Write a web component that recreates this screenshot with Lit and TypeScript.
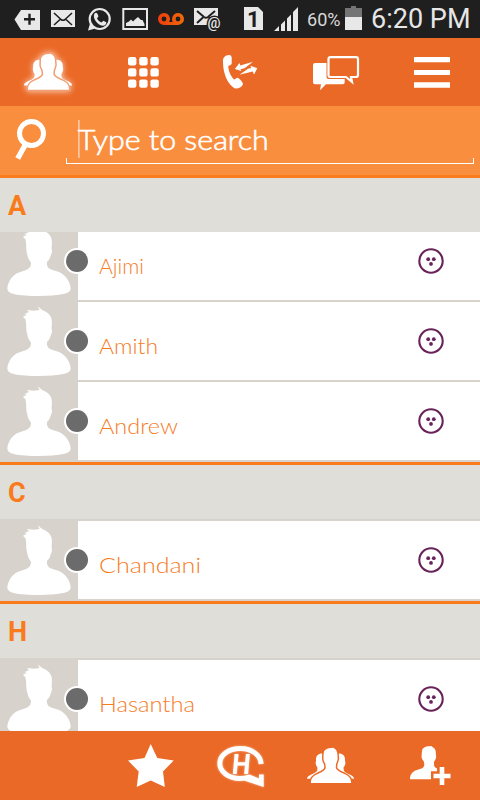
import { LitElement, html, svg, css, SVGTemplateResult } from "lit";
import { customElement, property } from "lit/decorators.js";

interface Contact {
  name: string;
  width: number;
}

const SECTIONS: { letter: string; contacts: Contact[] }[] = [
  {
    letter: "A",
    contacts: [
      { name: "Ajimi", width: 45 },
      { name: "Amith", width: 59 },
      { name: "Andrew", width: 79 },
    ],
  },
  { letter: "C", contacts: [{ name: "Chandani", width: 102 }] },
  { letter: "H", contacts: [{ name: "Hasantha", width: 96 }] },
];

const icon = (box: string, content: SVGTemplateResult) => {
  const [, , w, h] = box.split(" ");
  return html`<svg viewBox=${box} width=${w} height=${h}>${content}</svg>`;
};

const people = (gap: string) => svg`
  <path fill="#fff" d="M15.5 6.7C11 6.7 9 9.500 9.200 13.500L8.800 16.500C9.300 18.500 9.800 20 10.700 21L10.500 24C9.500 26 7 27 4 28.300C1 29.600 0 31 0 32.500H14L24 20ZM32.500 6.700C37 6.700 39 9.500 38.800 13.500L39.200 16.500C38.700 18.500 38.200 20 37.300 21L37.500 24C38.500 26 41 27 44 28.300C47 29.600 48 31 48 32.500H34L24 20Z"/>
  <path fill="#fff" stroke=${gap} stroke-width="3" paint-order="stroke"
    d="M26.700 .7C29 1.700 31.200 4 31 8L31.300 12C31 14 30.300 15.500 29.700 17L29.300 21C30 24 33.500 25.600 37.500 27.200C42.500 29.200 45 31.500 45 36.700H4C4 31.500 6.500 29.200 11.500 27.200C15.500 25.600 18.700 24 19.200 21L18.700 17C17.700 15.500 17 14 16.800 12L17 7C17 3 20 1 26.700 .7Z"/>`;

@customElement("status-bar")
class StatusBar extends LitElement {
  static styles = css`
    :host { display: flex; height: 38px; background: #1f1f1f; }
    svg { display: block; flex: none; }
    text { font-family: Roboto, sans-serif; }
  `;
  render() {
    return html`
      ${icon("0 0 46 38", svg`<path fill="#e8e8e8" d="M14.500 19.500 21 10H40V30H21Z"/><path stroke="#1f1f1f" stroke-width="2.400" d="M24 19.300H35M29.500 13.800V24.800"/>`)}
      ${icon("46 0 36 38", svg`<path fill="#e8e8e8" d="M51 10H75V27H51Z"/><path fill="none" stroke="#1f1f1f" stroke-width="1.600" d="M54 13 61 19.500Q63 21 65 19.500L72 13M54 25 60 19.500M72 25 66 19.500"/>`)}
      ${icon("82 0 34 38", svg`<circle cx="99.700" cy="19" r="10" fill="none" stroke="#e8e8e8" stroke-width="2.200"/><path fill="#e8e8e8" d="M88 30.500 90 23.500 94.500 28.700Z"/><path fill="#e8e8e8" d="M94.500 13.500C95.500 12.500 97 12.600 97.500 14L98.500 16.300 97 18.500C98 20.500 99.500 21.800 101.500 22.500L103.300 20.700 106.300 22.200C106.500 24.500 104.500 26 102.500 25.700C97.500 25 92 18 94.500 13.500Z"/>`)}
      ${icon("116 0 38 38", svg`<path fill="none" stroke="#e8e8e8" stroke-width="2" d="M123.300 9H147V29H123.300Z"/><path fill="#e8e8e8" d="M126 26V23L129 21.500 131 19.500 133 21.500 135 19.500 138 17 141 20 142.500 20 144.500 24V26Z"/>`)}
      ${icon("154 0 34 38", svg`<defs><linearGradient id="vm"><stop stop-color="#f03c0c"/><stop offset="1" stop-color="#f06a0a"/></linearGradient></defs><path fill="url(#vm)" fill-rule="evenodd" d="M164 13a6 6 0 0 0 0 12H178a6 6 0 1 0-5.200-3H169.200A6 6 0 0 0 164 13ZM164 16.600a2.400 2.400 0 1 1 0 4.800a2.400 2.400 0 0 1 0-4.800ZM178 16.600a2.400 2.400 0 1 1 0 4.800a2.400 2.400 0 0 1 0-4.800Z"/>`)}
      ${icon("188 0 50 38", svg`<path fill="#e8e8e8" d="M194 8H218V25H194Z"/><path fill="none" stroke="#1f1f1f" stroke-width="2" d="M197 11 204 17Q206 18.500 208 17L215 11M197 23 203 17.500M213 21 209 17.500"/><text x="207.500" y="27.500" font-size="14" font-weight="500" fill="#e8e8e8" stroke="#1f1f1f" stroke-width="3" paint-order="stroke" textLength="13" lengthAdjust="spacingAndGlyphs">@</text>`)}
      ${icon("238 0 30 38", svg`<path fill="#e8e8e8" d="M244 7H258L263 12V30H244Z"/><text x="247" y="27" font-size="22" font-weight="700" fill="#1f1f1f">1</text>`)}
      ${icon("268 0 36 38", svg`<path fill="#e8e8e8" d="M274 31 279 26V31ZM281 24.500 285 20.500V31H281ZM287 18.500 291 14.500V31H287ZM293 12 298 7V31H293Z"/>`)}
      ${icon("304 0 39 38", svg`<text x="307" y="26" font-size="17.500" fill="#d8d8d8" textLength="33.500" lengthAdjust="spacingAndGlyphs">60%</text>`)}
      ${icon("343 0 23 38", svg`<path fill="#757575" d="M345 8H351V6H356V8H362V17H345Z"/><path fill="#e8e8e8" d="M345 17H362V30H345Z"/>`)}
      ${icon("366 0 114 38", svg`<text x="371" y="28" font-size="27.500" fill="#e6e6e6" textLength="99.500" lengthAdjust="spacingAndGlyphs">6:20 PM</text>`)}
    `;
  }
}

@customElement("tab-bar")
class TabBar extends LitElement {
  static styles = css`
    :host { display: grid; grid-template-columns: repeat(5, 96px); height: 68px; background: #eb6926; }
    svg { display: block; }
    .glow { filter: drop-shadow(0 0 3px rgba(255, 255, 255, 0.75)); }
  `;
  render() {
    const dots = [0, 1, 2].flatMap((r) =>
      [0, 1, 2].map((c) => svg`<rect x=${128 + c * 11.2} y=${57 + r * 11.2} width="8.400" height="8.400" rx="2.200"/>`)
    );
    return html`
      ${icon("0 38 96 68", svg`<g class="glow"><g transform="translate(24 53)">${people("#f29e72")}</g></g>`)}
      ${icon("96 38 96 68", svg`<g fill="#fff">${dots}</g>`)}
      ${icon("192 38 96 68", svg`<g fill="#fff"><path d="M223 62C222.500 58 225 55 229 55C231 55 231.500 56 231.700 58V63.500C231.500 65 229 65.500 228.300 66C228.300 71 231 76.500 234 79.500C235.500 79.500 236.500 77.500 238 77.800C240 79 242.500 82 243 84C242 87.500 238 89 234.500 88.300C228 84.500 223 74 223 62Z"/><path d="M234.800 69 239.500 63 240.300 65.600 253 61.800 244.500 68.300 240.600 69.200 241.300 71Z"/><path d="M239.500 74.800 248 68.800 251.300 68 250.300 65.800 257.300 68.200 254 74.400 252.700 71.600Z"/></g>`)}
      ${icon("288 38 96 68", svg`<path fill="#fff" d="M315 63H326.500V77Q326.500 79 328.500 79H344.700V82.300Q344.700 84.300 342.700 84.300H326L320 90.300 321 84.300H315Q313 84.300 313 82.300V65Q313 63 315 63Z"/><path fill="#eb6926" stroke="#fff" stroke-width="2.200" d="M330.500 57.200H356Q358 57.200 358 59.200V75Q358 77 356 77H351L352 82 346 77H330.500Q328.500 77 328.500 75V59.200Q328.500 57.200 330.500 57.200Z"/>`)}
      ${icon("384 38 96 68", svg`<path fill="#fff" d="M414 57H450V62.300H414ZM414 70H450V75H414ZM414 82.300H450V87.700H414Z"/>`)}
    `;
  }
}

@customElement("search-field")
class SearchField extends LitElement {
  static styles = css`
    :host { display: flex; box-sizing: border-box; height: 72px; background: #f98e3e; border-bottom: 3px solid #f97b1c; }
    svg { display: block; }
    .field { box-sizing: border-box; width: 408px; height: 6px; margin-top: 52px; border: solid #fff; border-width: 0 1px 1px; }
    .entry { display: flex; margin-top: -40px; }
    text { font-family: Lato, sans-serif; font-weight: 300; }
  `;
  render() {
    return html`
      ${icon("0 106 66 69", svg`<g fill="none" stroke="#fff"><circle cx="31.500" cy="133.500" r="12" stroke-width="5"/><path stroke-width="5.400" d="M26 143.500 17.700 158.500"/></g>`)}
      <div class="field">
        <div class="entry">
          ${icon("67 118 220 42", svg`<path fill="#fcc79f" d="M78 120H79.700V158H78Z"/><text x="77.800" y="149.500" font-size="26.500" fill="#fff" stroke="#fff" stroke-width=".6" textLength="191" lengthAdjust="spacingAndGlyphs">Type to search</text>`)}
        </div>
      </div>
    `;
  }
}

@customElement("contact-row")
class ContactRow extends LitElement {
  @property({ attribute: false }) contact!: Contact;
  static styles = css`
    :host { display: flex; position: relative; height: 78px; background: #fff; border-bottom: 2px solid #d7d2cc; }
    svg { display: block; }
    .avatar { width: 78px; height: 80px; background: #d7d2cc; }
    .status { position: absolute; left: 66px; top: 28px; width: 22px; height: 22px; border-radius: 50%; background: #6b6b6b; box-shadow: 0 0 0 2px #fff; }
    .name { width: 322px; }
    text { font-family: Lato, sans-serif; font-weight: 300; }
  `;
  render() {
    return html`
      <div class="avatar">
        ${icon("0 0 78 78", svg`<path fill="#fff" d="M23 14.700 27 12.700 24.300 12.200 29 10 27 8 34 8.800 39.500 8 38 4.500 42.500 8.300C46.500 9.300 50 12.500 51.300 16C52.300 19 51.800 22 51.600 26L52 29.500C51.800 31.500 51 32.500 50.500 34C50 36.500 48.500 38.500 47 40C46.500 43 47.500 45.500 50 47C53.500 48.800 58 49 61 51C67 55 70.300 60.500 70.700 66.500C70.500 69.500 67.500 70.800 64.500 71.800C57 73.600 48 74 39 74C30 74 20 73.700 13 71.800C10 70.800 7.500 69.500 7.300 66.500C8 60 11.500 54.500 17 51.300C20 49.500 25 49 28 47C30.500 45.300 31.200 43 30.900 40.500C29 38 28 36 27.500 33.500C26.500 30 26 26 26.200 22L25.500 17.500Z"/>`)}
      </div>
      <div class="status"></div>
      <div class="name">
        ${icon("78 0 322 78", svg`<text x="99" y="51.500" font-size="21" fill="#f57c1f" textLength=${this.contact.width} lengthAdjust="spacingAndGlyphs">${this.contact.name}</text>`)}
      </div>
      ${icon("400 0 80 78", svg`<circle cx="431" cy="39" r="11.700" fill="none" stroke="#68235a" stroke-width="2.100"/><g fill="#68235a"><circle cx="428.200" cy="37.200" r="1.900"/><circle cx="433.800" cy="37.200" r="1.900"/><circle cx="431" cy="41.900" r="1.900"/></g>`)}
    `;
  }
}

@customElement("bottom-bar")
class BottomBar extends LitElement {
  static styles = css`
    :host { display: grid; grid-template-columns: 90px 90px 90px 104px; padding-left: 106px; height: 69px; background: #eb6926; }
    svg { display: block; }
    .soft { filter: drop-shadow(0 0 1px rgba(255, 255, 255, 0.5)); }
    text { font-family: Roboto, sans-serif; font-weight: 700; }
  `;
  render() {
    return html`
      ${icon("106 731 90 69", svg`<path fill="#fff" d="M150.700 744 157.300 758 173.700 760.500 163 771.500 164.800 787 150.700 780.500 136.700 787 138.700 771.500 128 760.500 144.500 758Z"/>`)}
      ${icon("196 731 90 69", svg`<g class="soft"><path fill="none" stroke="#fff" stroke-width="5" d="M261.200 764C260.500 755 252 748.500 240.500 748.500C228 748.500 219.800 755.500 219.800 763.500C219.800 772 229 778.500 240 778.500C243.500 778.500 246.500 778 249 777"/><path fill="#fff" d="M244 776.500 249.500 774.500 259 778.500V774.500H263.700V787L244 780.500Z"/><text transform="translate(231.300 773.500) skewX(-5)" font-size="28" fill="#fff" textLength="18.500" lengthAdjust="spacingAndGlyphs">H</text></g>`)}
      ${icon("286 731 90 69", svg`<g transform="translate(307 747) scale(.98)">${people("#eb6926")}</g>`)}
      ${icon("376 731 104 69", svg`<g fill="#fff"><path d="M431 746C434 747.500 436.200 749.500 435.800 753.500L436.200 757C435.800 759.500 434.500 760.500 434 762V765C434.500 767.500 436 768 437 768.300V771.300H431V779.300H410C410 774 412.500 771.500 417 770C421 768.800 424.500 768 424.300 764.500L423.800 761.500C422.500 760 421.800 758.500 421.500 756.500L422 751C422.500 747.500 425.500 746.200 431 746Z"/><path d="M439.700 767H444.300V773.700H450.500V778.300H444.300V785H439.700V778.300H433.500V773.700H439.700Z"/></g>`)}
    `;
  }
}

@customElement("app-root")
class AppRoot extends LitElement {
  static styles = css`
    :host { display: flex; flex-direction: column; width: 480px; height: 800px; overflow: hidden; background: #fff; }
    status-bar, tab-bar, search-field, bottom-bar { flex: none; }
    .list { flex: 1; min-height: 0; overflow: hidden; }
    .heading { box-sizing: border-box; height: 54px; padding-left: 8px; background: #dfded9; color: #f97b1c; font: 700 27px/57px Roboto, sans-serif; }
    .section { border-top: 3px solid #f97b1c; }
    .rows { overflow: hidden; border-top: 2px solid #d7d2cc; }
    .section:first-child { border-top: 0; }
    .section:first-child .rows { border-top: 0; height: 230px; display: flex; flex-direction: column; justify-content: flex-end; }
    .section:first-child contact-row { flex: none; }
  `;
  render() {
    return html`
      <status-bar></status-bar>
      <tab-bar></tab-bar>
      <search-field></search-field>
      <div class="list">
        ${SECTIONS.map(
          (s) => html`<div class="section">
            <div class="heading">${s.letter}</div>
            <div class="rows">${s.contacts.map((c) => html`<contact-row .contact=${c}></contact-row>`)}</div>
          </div>`
        )}
      </div>
      <bottom-bar></bottom-bar>
    `;
  }
}
